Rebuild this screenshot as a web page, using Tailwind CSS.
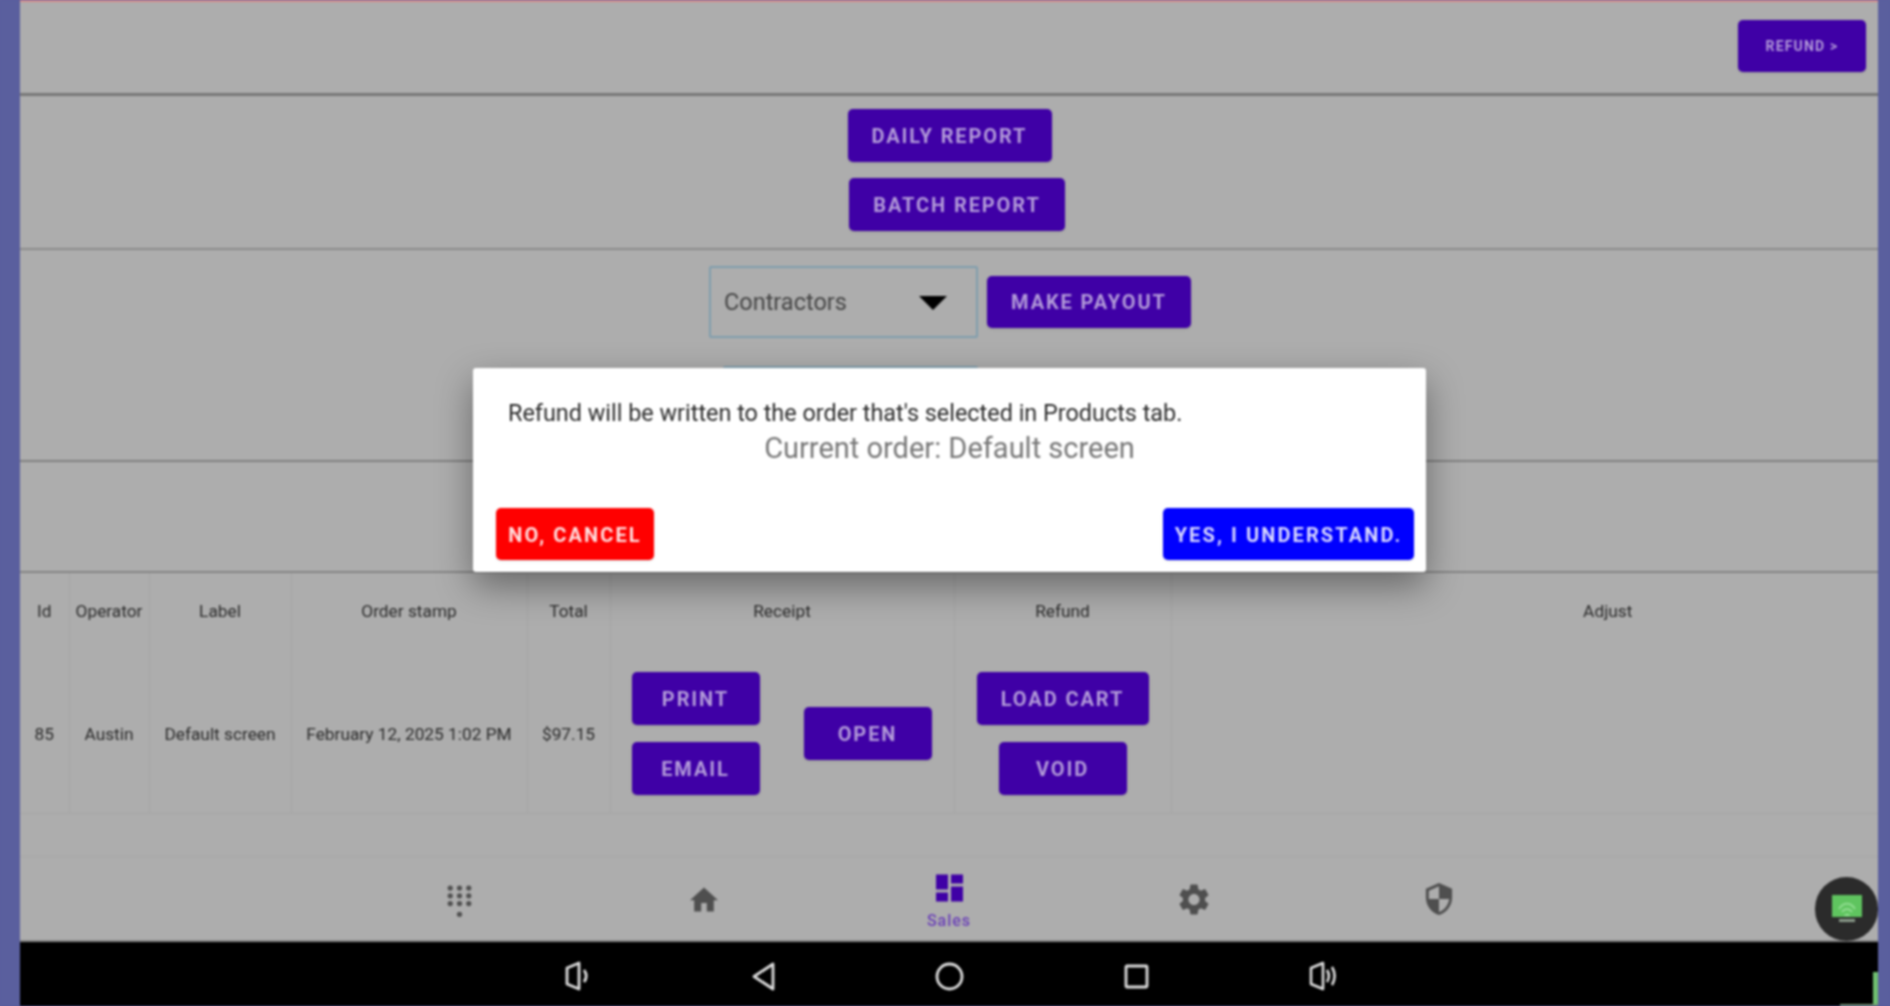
<!DOCTYPE html>
<html lang="en">
<head>
    <meta charset="UTF-8">
    <meta name="viewport" content="width=device-width, initial-scale=1.0">
    <title>Sales</title>
    <script src="https://cdn.jsdelivr.net/npm/@tailwindcss/browser@4"></script>
</head>
<body class="bg-[#5a5f9e] font-['Roboto',sans-serif]">
    <div class="flex h-[1006px] w-[1890px] overflow-hidden blur-[0.8px]">
        <div class="w-[20px] shrink-0 bg-[#5a5f9e]"></div>

        <main class="relative flex w-[1858px] shrink-0 flex-col bg-[#adadad]">
            <!-- refund -->
            <section class="flex h-[96px] shrink-0 justify-end border-t-2 border-b-3 border-t-[#d88a8a] border-b-[#777777] pt-[18px] pr-[12px]">
                <button class="h-[52px] w-[128px] rounded-[5px] bg-[#3f00a6] text-[14px] font-bold tracking-[1.2px] text-[#b39bd9] shadow-sm">REFUND &gt;</button>
            </section>

            <!-- reports -->
            <section class="flex h-[154px] shrink-0 flex-col items-center gap-[16px] border-b-2 border-[#8a8a8a] pt-[13px]">
                <button class="ml-[1px] h-[53px] w-[204px] rounded-[5px] bg-[#3f00a6] text-[20px] font-bold tracking-[1.9px] text-[#b39bd9] shadow-sm">DAILY REPORT</button>
                <button class="ml-[16px] h-[53px] w-[216px] rounded-[5px] bg-[#3f00a6] text-[20px] font-bold tracking-[1.9px] text-[#b39bd9] shadow-sm">BATCH REPORT</button>
            </section>

            <!-- payouts -->
            <section class="flex h-[212px] shrink-0 flex-col items-center border-b-2 border-[#808080] pt-[16px]">
                <div class="ml-[2px] flex items-center gap-[9px]">
                    <div class="flex h-[72px] w-[269px] items-center justify-between rounded-[2px] border-2 border-[#7f9dad] pt-[2px] pr-[29px] pl-[13px] text-[23.5px] text-[#454545]">
                        Contractors
                        <svg width="28" height="14" viewBox="0 0 28 14"><path d="M0 0h28L14 14z" fill="#000"/></svg>
                    </div>
                    <button class="h-[52px] w-[204px] rounded-[5px] bg-[#3f00a6] text-[20px] font-bold tracking-[1.9px] text-[#b39bd9] shadow-sm">MAKE PAYOUT</button>
                </div>
                <div class="mt-[28px] mr-[198px] h-[72px] w-[255px] rounded-[2px] border-2 border-[#7f9dad]"></div>
            </section>

            <section class="h-[111px] shrink-0 border-b-2 border-[#848484]"></section>

            <!-- orders -->
            <table class="w-full shrink-0 table-fixed border-collapse text-center text-[17.3px] text-[#2b2b2b]">
                <thead>
                    <tr class="h-[74px]">
                        <th class="w-[49px] border-r border-[#a5a5a5] pt-[3px] font-normal">Id</th>
                        <th class="w-[80px] border-r border-[#a5a5a5] pt-[3px] font-normal">Operator</th>
                        <th class="w-[142px] border-r border-[#a5a5a5] pt-[3px] font-normal">Label</th>
                        <th class="w-[236px] border-r border-[#a5a5a5] pt-[3px] font-normal">Order stamp</th>
                        <th class="w-[83px] border-r border-[#a5a5a5] pt-[3px] font-normal">Total</th>
                        <th class="w-[344px] border-r border-[#a5a5a5] pt-[3px] font-normal">Receipt</th>
                        <th class="w-[217px] border-r border-[#a5a5a5] pt-[3px] font-normal">Refund</th>
                        <th class="pt-[3px] pl-[166px] font-normal">Adjust</th>
                    </tr>
                </thead>
                <tbody>
                    <tr class="h-[166px] border-b border-[#a5a5a5]">
                        <td class="border-r border-[#a5a5a5] pt-[10px]">85</td>
                        <td class="border-r border-[#a5a5a5] pt-[10px]">Austin</td>
                        <td class="border-r border-[#a5a5a5] pt-[10px]">Default screen</td>
                        <td class="border-r border-[#a5a5a5] pt-[10px]">February 12, 2025 1:02 PM</td>
                        <td class="border-r border-[#a5a5a5] pt-[10px]">$97.15</td>
                        <td class="border-r border-[#a5a5a5] pt-[8px]">
                            <div class="flex items-center pl-[21px]">
                                <div class="flex flex-col gap-[17px]">
                                    <button class="h-[53px] w-[128px] rounded-[5px] bg-[#3f00a6] text-[20px] font-bold tracking-[1.9px] text-[#b39bd9] shadow-sm">PRINT</button>
                                    <button class="h-[53px] w-[128px] rounded-[5px] bg-[#3f00a6] text-[20px] font-bold tracking-[1.9px] text-[#b39bd9] shadow-sm">EMAIL</button>
                                </div>
                                <button class="ml-[44px] h-[53px] w-[128px] rounded-[5px] bg-[#3f00a6] text-[20px] font-bold tracking-[1.9px] text-[#b39bd9] shadow-sm">OPEN</button>
                            </div>
                        </td>
                        <td class="border-r border-[#a5a5a5] pt-[8px]">
                            <div class="flex flex-col items-center gap-[17px]">
                                <button class="h-[53px] w-[172px] rounded-[5px] bg-[#3f00a6] text-[20px] font-bold tracking-[1.9px] text-[#b39bd9] shadow-sm">LOAD CART</button>
                                <button class="h-[53px] w-[128px] rounded-[5px] bg-[#3f00a6] text-[20px] font-bold tracking-[1.9px] text-[#b39bd9] shadow-sm">VOID</button>
                            </div>
                        </td>
                        <td></td>
                    </tr>
                </tbody>
            </table>

            <div class="h-[43px] shrink-0 border-b border-[#a6a6a6]"></div>

            <!-- bottom nav -->
            <nav class="flex h-[85px] shrink-0 justify-center border-b-2 border-[#858585]">
                <div class="flex w-[245px] items-center justify-center pt-[7px]">
                    <svg width="25" height="34" viewBox="4 1 16 22" fill="#505050">
                        <circle cx="6" cy="3" r="1.7"/><circle cx="12" cy="3" r="1.7"/><circle cx="18" cy="3" r="1.7"/>
                        <circle cx="6" cy="8" r="1.7"/><circle cx="12" cy="8" r="1.7"/><circle cx="18" cy="8" r="1.7"/>
                        <circle cx="6" cy="13" r="1.7"/><circle cx="12" cy="13" r="1.7"/><circle cx="18" cy="13" r="1.7"/>
                        <circle cx="12" cy="20" r="1.7"/>
                    </svg>
                </div>
                <div class="flex w-[245px] items-center justify-center pt-[2px]">
                    <svg width="28" height="25" viewBox="2 3 20 17" fill="#4f4f4f"><path d="M10 20v-6h4v6h5v-8h3L12 3 2 12h3v8z"/></svg>
                </div>
                <div class="flex w-[245px] flex-col items-center pt-[17px]">
                    <svg width="27" height="28" viewBox="3 3 18 18" fill="#3f00a6"><path d="M3 13h8V3H3v10zm0 8h8v-6H3v6zm10 0h8V11h-8v10zm0-18v6h8V3h-8z"/></svg>
                    <span class="mt-[9px] text-[16px] leading-[20px] font-medium tracking-[1px] text-[#6a3fb8]">Sales</span>
                </div>
                <div class="flex w-[245px] items-center justify-center pt-[2px]">
                    <svg width="30" height="31" viewBox="2.5 2 19 20" fill="#4f4f4f"><path d="M19.14 12.94c.04-.3.06-.61.06-.94 0-.32-.02-.64-.07-.94l2.03-1.58c.18-.14.23-.41.12-.61l-1.92-3.32c-.12-.22-.37-.29-.59-.22l-2.39.96c-.5-.38-1.03-.7-1.62-.94l-.36-2.54c-.04-.24-.24-.41-.48-.41h-3.84c-.24 0-.43.17-.47.41l-.36 2.54c-.59.24-1.13.57-1.62.94l-2.39-.96c-.22-.08-.47 0-.59.22L2.74 8.87c-.12.21-.08.47.12.61l2.03 1.58c-.05.3-.09.63-.09.94s.02.64.07.94l-2.03 1.58c-.18.14-.23.41-.12.61l1.92 3.32c.12.22.37.29.59.22l2.39-.96c.5.38 1.03.7 1.62.94l.36 2.54c.05.24.24.41.48.41h3.84c.24 0 .44-.17.47-.41l.36-2.54c.59-.24 1.13-.56 1.62-.94l2.39.96c.22.08.47 0 .59-.22l1.92-3.32c.12-.22.07-.47-.12-.61l-2.01-1.58zM12 15.6c-1.98 0-3.6-1.62-3.6-3.6s1.62-3.6 3.6-3.6 3.6 1.62 3.6 3.6-1.62 3.6-3.6 3.6z"/></svg>
                </div>
                <div class="flex w-[245px] items-center justify-center pt-[2px]">
                    <svg width="28" height="32" viewBox="3 1 18 22" fill="#4f4f4f"><path d="M12 1L3 5v6c0 5.55 3.84 10.74 9 12 5.16-1.26 9-6.45 9-12V5l-9-4zm0 10.99h7c-.53 4.12-3.28 7.79-7 8.94V12H5V6.3l7-3.11v8.8z"/></svg>
                </div>
            </nav>

            <!-- system bar -->
            <footer class="flex h-[65px] shrink-0 items-center justify-center bg-black pt-[4px]">
                <div class="flex w-[187px] justify-center pl-[5px]">
                    <svg width="26" height="30" viewBox="0 0 26 30" fill="none" stroke="#dddddd" stroke-width="2.8" stroke-linejoin="round"><path d="M2 7l12-5v26L2 23z"/><path d="M19 9c3 4 3 8 0 12"/></svg>
                </div>
                <div class="flex w-[187px] justify-center pl-[2px]">
                    <svg width="25" height="29" viewBox="0 0 25 29" fill="none" stroke="#dddddd" stroke-width="2.8" stroke-linejoin="round"><path d="M22 2v25L3 14.5z"/></svg>
                </div>
                <div class="flex w-[187px] justify-center">
                    <svg width="29" height="29" viewBox="0 0 29 29" fill="none" stroke="#dddddd" stroke-width="2.8"><circle cx="14.5" cy="14.5" r="12.5"/></svg>
                </div>
                <div class="flex w-[187px] justify-center">
                    <svg width="25" height="25" viewBox="0 0 25 25" fill="none" stroke="#dddddd" stroke-width="2.8"><rect x="2" y="2" width="21" height="21" rx="1"/></svg>
                </div>
                <div class="flex w-[187px] justify-center pl-[2px]">
                    <svg width="30" height="30" viewBox="0 0 30 30" fill="none" stroke="#dddddd" stroke-width="2.6" stroke-linejoin="round"><path d="M2 7l12-5v26L2 23z"/><path d="M18 9c2.500 4 2.500 8 0 12"/><path d="M23 6c3.500 6 3.500 12 0 18"/></svg>
                </div>
            </footer>

            <!-- refund dialog -->
            <div class="absolute top-[368px] left-[453px] flex h-[204px] w-[953px] flex-col rounded-[3px] bg-white shadow-[0_14px_36px_rgba(0,0,0,0.4)]">
                <p class="mt-[31px] ml-[35px] text-[23.4px] leading-[28px] text-[#2b2b2b]">Refund will be written to the order that's selected in Products tab.</p>
                <p class="mt-[5px] text-center text-[29px] leading-[32px] text-[#777777]">Current order: Default screen</p>
                <div class="mt-auto flex justify-between pr-[12px] pb-[12px] pl-[23px]">
                    <button class="h-[52px] w-[158px] rounded-[5px] bg-[#ff0000] pt-[1px] text-[20px] font-bold tracking-[2.100px] text-[#ffe0e0] shadow-sm">NO, CANCEL</button>
                    <button class="h-[52px] w-[251px] rounded-[5px] bg-[#0000ff] pt-[1px] text-[20px] font-bold tracking-[2.100px] text-[#d8d8ff] shadow-sm">YES, I UNDERSTAND.</button>
                </div>
            </div>

            <!-- floating overlay widget -->
            <div class="absolute top-[877px] left-[1795px] flex h-[64px] w-[63px] flex-col items-center rounded-full bg-[#2b2b2b] pt-[18px]">
                <div class="flex h-[22px] w-[30px] items-end justify-center bg-[#5fc45f]">
                    <svg width="20" height="18" viewBox="0 0 20 18" fill="none" stroke="#8fdc8f" stroke-width="2"><path d="M2 10c4-7 12-7 16 0M5 13c3-4 7-4 10 0M8 17c1-2 3-2 4 0"/></svg>
                </div>
                <div class="mt-[2px] h-[3px] w-[16px] bg-[#8a9a8a]"></div>
            </div>

            <!-- corner of the window behind -->
            <div class="absolute right-0 bottom-0 h-[34px] w-[5px] bg-[#6fbf6f]"></div>
            <div class="absolute right-0 bottom-0 h-[2px] w-[38px] bg-[#6f8f6f]"></div>
        </main>

        <div class="w-[12px] shrink-0 bg-[#5a5f9e]"></div>
    </div>
</body>
</html>
